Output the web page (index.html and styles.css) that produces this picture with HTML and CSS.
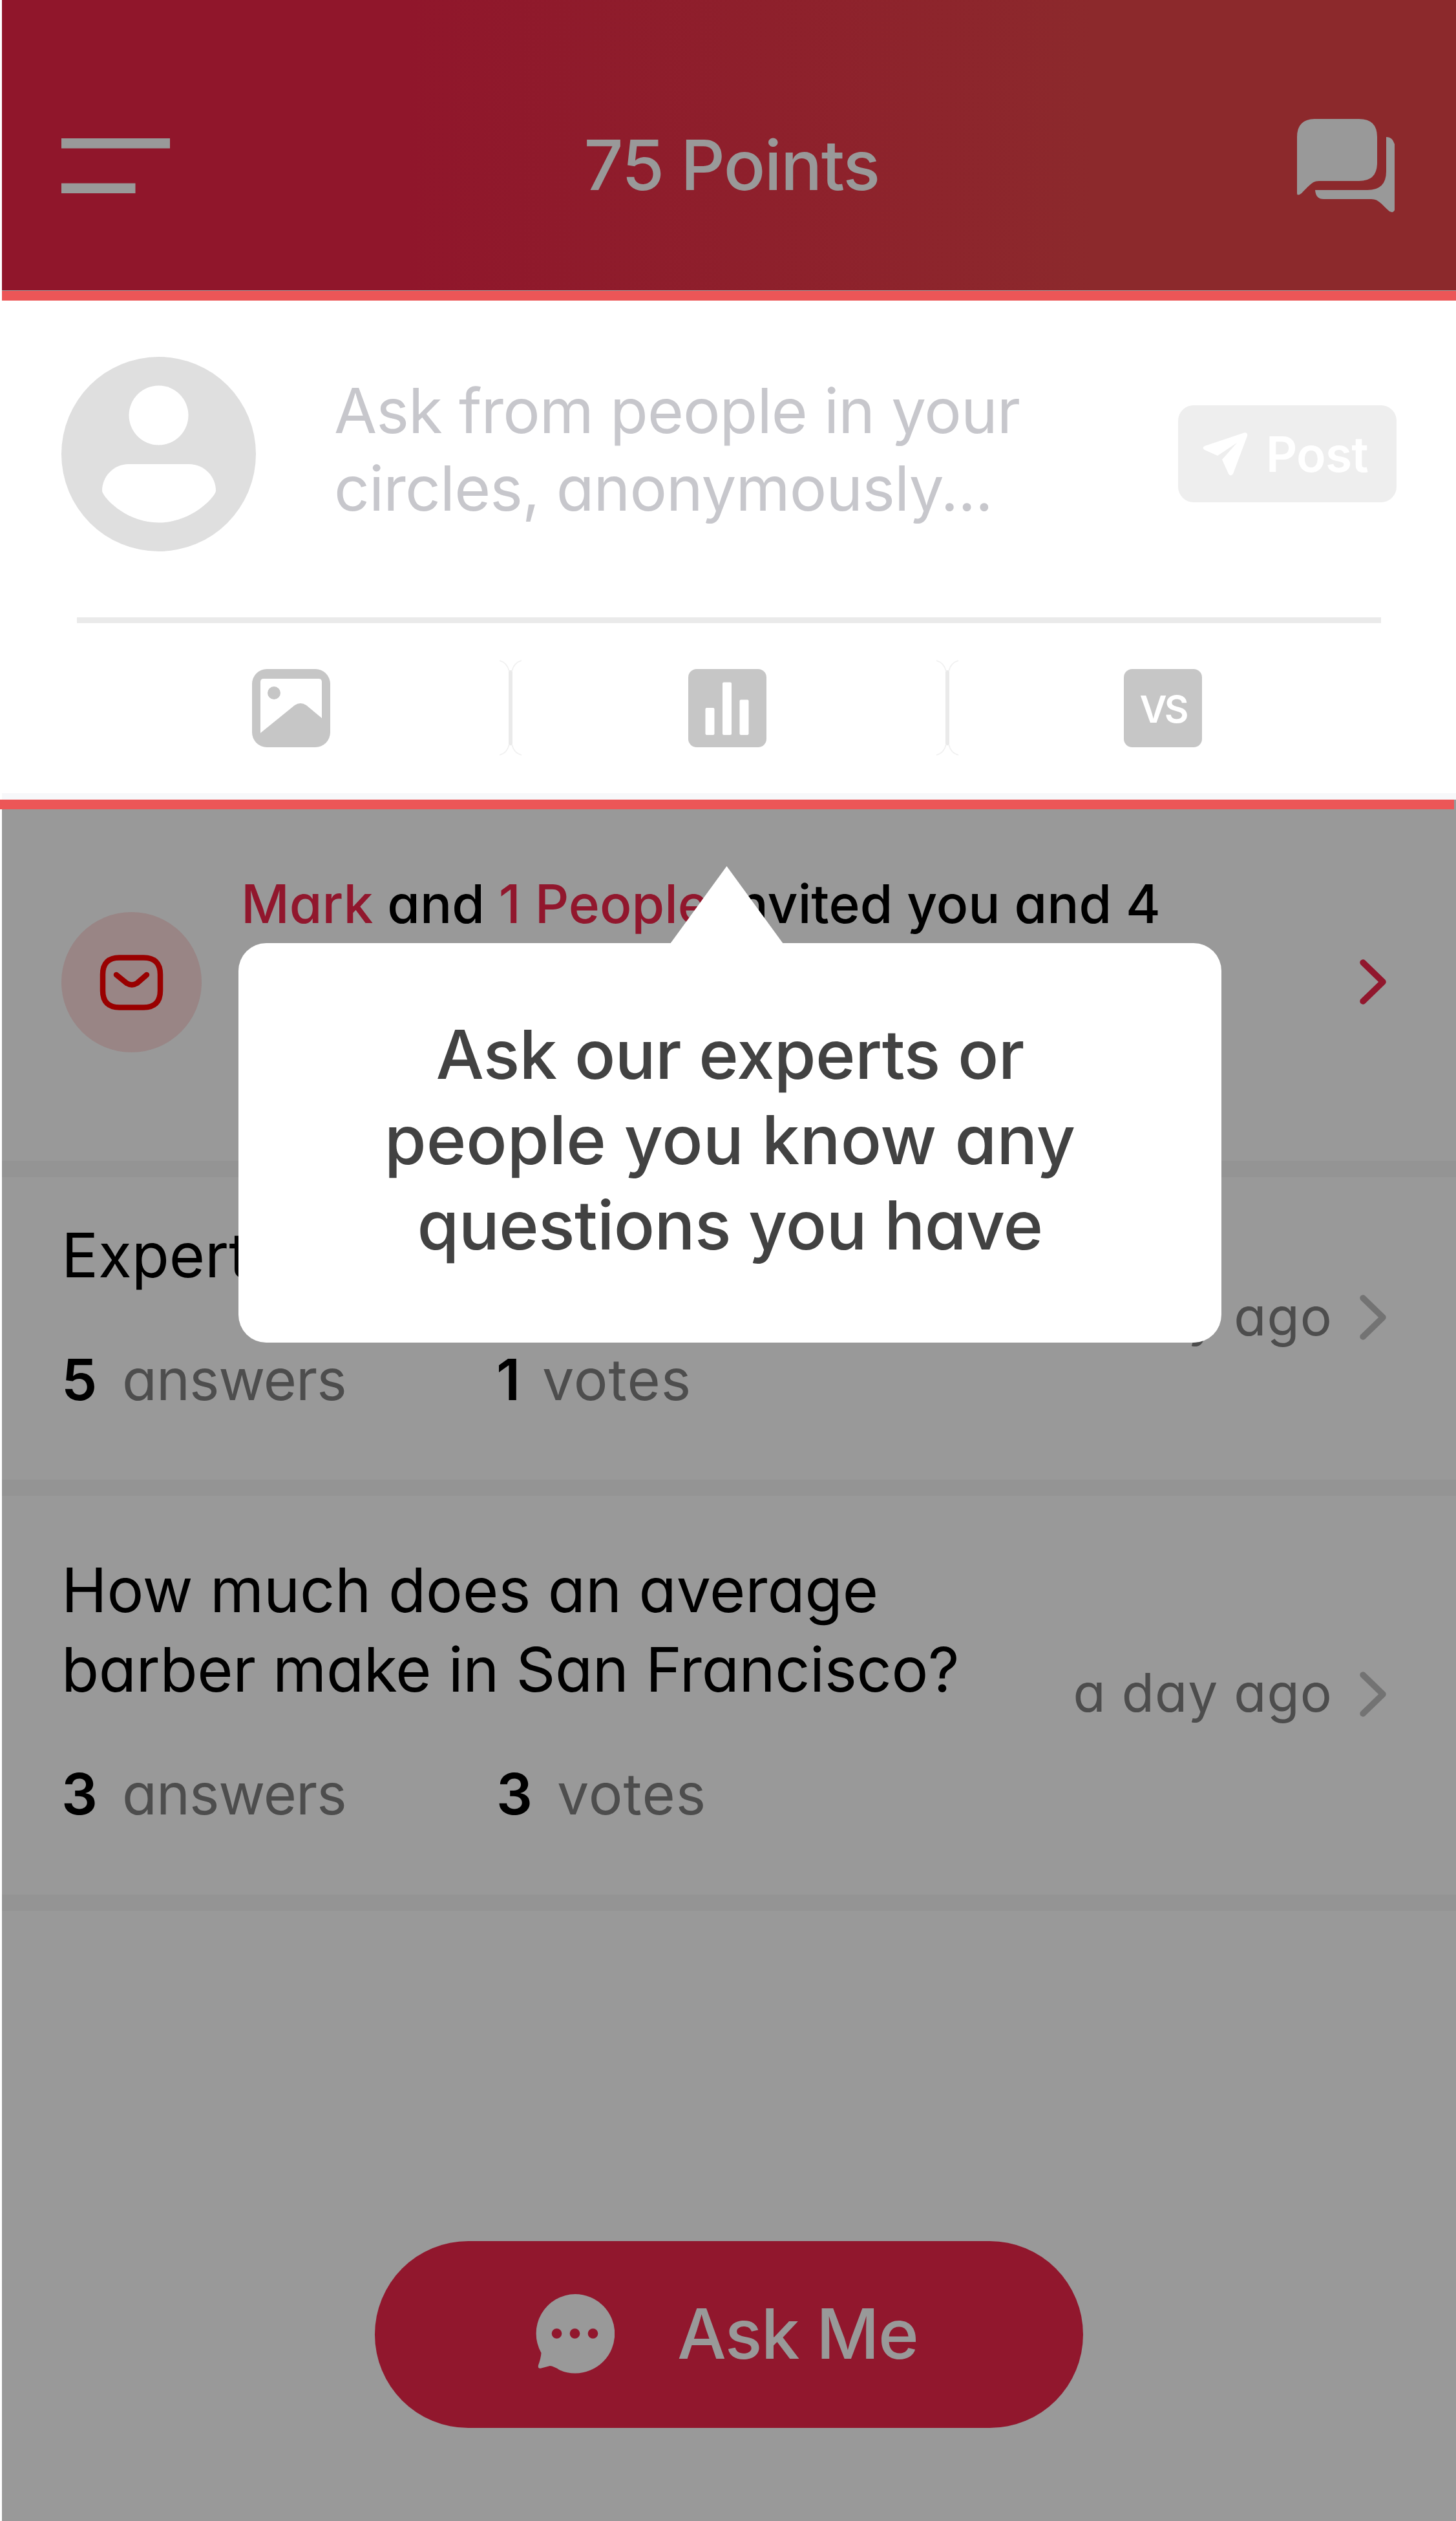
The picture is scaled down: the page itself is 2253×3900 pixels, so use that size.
FILE: index.html
```html
<!DOCTYPE html>
<html lang="en">
<head>
<meta charset="utf-8">
<title>Ask</title>
<link rel="stylesheet" href="styles.css">
</head>
<body>
<main class="app">
  <header class="header">
    <svg class="menu" viewBox="0 0 168 85" aria-label="Menu"><path d="M0 0h168v15.500H0zM0 69.500h114.500V85H0z"/></svg>
    <h1 class="points">75 Points</h1>
    <svg class="chats" viewBox="0 0 152 146" aria-label="Messages">
      <path d="M28 0h68q28 0 28 28v40q0 28-28 28H34C24 96 20 102 7 115q-7 5-7 0V28Q0 0 28 0z"/>
      <path d="M138 28q9-1 13 11v102q-2 5-8 2c-12-10-16-19-28-19H41q-12 0-13-14h81q29 0 29-29z"/>
    </svg>
  </header>

  <section class="composer">
    <div class="ask">
      <svg class="avatar" viewBox="0 0 301 301">
        <circle class="avatar-disc" cx="150.500" cy="150.500" r="150.500"/>
        <circle class="avatar-body" cx="150.500" cy="90.500" r="46"/>
        <path class="avatar-body" d="M104 166h93c25 0 42 20 42 41 0 9-37 49.500-88.500 49.500S63 216 63 207c0-21 17-41 41-41z"/>
      </svg>
      <p class="placeholder">Ask from people in your<br>circles, anonymously...</p>
      <button class="post">
        <svg class="plane" viewBox="0 0 70 67"><path d="M3 21 64 .500q6-1 5 5L47 64q-4 5-7 0L30 42 53 16 23 36 3 27q-5-3 0-6z"/></svg>
        <span>Post</span>
      </button>
    </div>
    <div class="tools">
      <svg class="tool" viewBox="0 0 121 121">
        <rect class="tile" width="121" height="121" rx="23"/>
        <path class="cut" d="M18 15h85q5 0 5 5v56L84 56q-9-6-18 0L13 99V20q0-5 5-5z"/>
        <circle class="tile" cx="34" cy="37" r="10"/>
      </svg>
      <svg class="split" viewBox="0 0 36 148"><path class="stem" d="M18 16v116"/><path class="flare" d="M1 1q12 3 15 17M35 1Q23 4 20 18M1 147q12-3 15-17M35 147q-12-3-15-17"/></svg>
      <svg class="tool tool-poll" viewBox="0 0 121 121">
        <rect class="tile" width="121" height="121" rx="13"/>
        <rect class="cut" x="26.500" y="60" width="14" height="42" rx="2"/>
        <rect class="cut" x="53" y="20.500" width="14" height="81.500" rx="2"/>
        <rect class="cut" x="79.500" y="47.500" width="14" height="54.500" rx="2"/>
      </svg>
      <svg class="split" viewBox="0 0 36 148"><path class="stem" d="M18 16v116"/><path class="flare" d="M1 1q12 3 15 17M35 1Q23 4 20 18M1 147q12-3 15-17M35 147q-12-3-15-17"/></svg>
      <div class="tool versus">VS</div>
    </div>
  </section>
  <div class="edge"></div>

  <section class="invite">
    <svg class="mail" viewBox="0 0 217 217">
      <circle class="mail-disc" cx="108.500" cy="108.500" r="108.500"/>
      <path class="mail-line" d="M90 70.500h37q26 0 26 26v25q0 26-26 26H90q-26 0-26-26v-25q0-26 26-26z"/>
      <path class="mail-line" d="M85 97l16 13q8 5 16 0l15-13"/>
    </svg>
    <p class="invite-text"><b>Mark</b> and <b>1 People</b> invited you and 4</p>
    <svg class="chevron" viewBox="0 0 42 70"><path d="M5 5l31 30L5 65"/></svg>
    <div class="tip">
      <p><span class="snug">Ask our experts or</span><br>people you know any<br><span class="snug">questions you have</span></p>
    </div>
  </section>

  <article class="question question-short">
    <div class="body">
      <h2>Expert</h2>
      <p class="stats"><b>5</b><span class="answers">answers</span><b class="one">1</b><span class="votes">votes</span></p>
    </div>
    <aside class="when"><span>a day ago</span><svg class="chevron" viewBox="0 0 42 70"><path d="M5 5l31 30L5 65"/></svg></aside>
  </article>

  <article class="question question-long">
    <div class="body">
      <h2>How much does an average<br><span class="snug">barber make in San Francisco?</span></h2>
      <p class="stats"><b>3</b><span class="answers">answers</span><b>3</b><span class="votes">votes</span></p>
    </div>
    <aside class="when"><span>a day ago</span><svg class="chevron" viewBox="0 0 42 70"><path d="M5 5l31 30L5 65"/></svg></aside>
  </article>

  <button class="ask-me">
    <svg class="bubble" viewBox="0 0 122 123"><path d="M61 0a61 61 0 0 1 0 122.500q-13 0-24-5-9-6-15-6.500l-15 4q-4 0-3-5 4-11 4.500-19A61 61 0 0 1 61 0z"/><g class="dots"><circle cx="32.500" cy="61" r="7.800"/><circle cx="60.500" cy="61" r="7.800"/><circle cx="88.500" cy="61" r="7.800"/></g></svg>
    <span>Ask Me</span>
  </button>
</main>
</body>
</html>
```
FILE: styles.css
```css
* { box-sizing: border-box; }
body {
  margin: 0;
  background: #fff;
  font-family: Inter, "Liberation Sans", sans-serif;
  font-feature-settings: "cv11";
}
h1, h2, p { margin: 0; font-weight: inherit; }
button { border: 0; padding: 0; font: inherit; }
svg { display: block; flex: none; }

.app {
  display: flex;
  flex-direction: column;
  width: 2250px;
  height: 3900px;
  margin-left: 3px;
  background: #999;
}

.header {
  display: flex;
  align-items: center;
  justify-content: space-between;
  height: 449px;
  padding: 64px 94px 0 92px;
  background: linear-gradient(90deg, #90162b 28%, #8c292c 75%);
}
.menu { width: 168px; height: 85px; fill: #999; }
.points { padding: 0 6px 3px 0; color: #999; font-size: 107px; font-weight: 500; letter-spacing: -1.65px; line-height: 130px; white-space: nowrap; }
.chats { width: 152px; height: 146px; fill: #999; }

.composer {
  height: 787px;
  border-top: 15px solid #ec5657;
  border-bottom: 10px solid #f7f8fa;
  margin-top: 1px;
  background: #fff;
}
.ask { display: flex; align-items: center; height: 490px; margin: 0 92px; padding-bottom: 16px; }
.avatar { width: 301px; height: 301px; }
.avatar-disc { fill: #dfdfdf; }
.avatar-body { fill: #fff; }
.placeholder { flex: 1; margin-left: 121px; padding-bottom: 14px; color: #c7c7cc; font-size: 96px; letter-spacing: -.92px; line-height: 120px; white-space: nowrap; }
.post { display: flex; align-items: center; width: 338px; height: 150px; padding-left: 38px; border-radius: 24px; background: #eee; color: #fff; font-size: 75px; font-weight: 600; letter-spacing: -.8px; }
.plane { width: 70px; height: 67px; margin-right: 28px; fill: #fff; }
.tools {
  display: grid;
  grid-template-columns: 644px 36px 640px 36px 631px;
  place-items: center;
  height: 271px;
  margin-left: 116px;
  margin-right: 116px;
  padding-left: 9px;
  border-top: 9px solid #eaeaea;
}
.tool { width: 121px; height: 121px; }
.tool-poll { margin-right: 6px; }
.tile { fill: #c6c6c6; }
.cut { fill: #fff; }
.split { width: 36px; height: 148px; fill: none; stroke: #eaeaea; }
.stem { stroke-width: 6; }
.flare { stroke-width: 1.500; stroke: #f0f0f0; }
.versus { display: flex; align-items: center; justify-content: center; padding-top: 3px; border-radius: 13px; background: #c6c6c6; color: #fff; font-size: 58px; font-weight: 600; letter-spacing: -4px; }
.edge { flex: none; width: 2250px; height: 15px; margin-left: -3px; background: #ec5657; }

.invite {
  position: relative;
  display: flex;
  align-items: center;
  height: 569px;
  padding: 0 107px 10px 92px;
  border-bottom: 25px solid #949494;
}
.mail { width: 217px; height: 217px; }
.mail-disc { fill: #998585; }
.mail-line { fill: none; stroke: #900; stroke-width: 8.500; stroke-linecap: round; stroke-linejoin: round; }
.invite-text { flex: 1; height: 360px; margin-left: 61px; color: #000; font-size: 82px; font-weight: 500; line-height: 120px; white-space: nowrap; }
.invite-text b { color: #91172d; font-weight: 500; }
.chevron { width: 42px; height: 70px; fill: none; stroke: #737373; stroke-width: 9.500; stroke-linecap: round; stroke-linejoin: round; }
.invite .chevron { stroke: #91172d; }

.tip {
  position: absolute;
  z-index: 2;
  top: 207px;
  left: 366px;
  display: flex;
  align-items: center;
  justify-content: center;
  width: 1521px;
  height: 618px;
  padding-bottom: 10px;
  border-radius: 43px;
  background: #fff;
  color: #424242;
  font-size: 105px;
  font-weight: 500;
  line-height: 132px;
  text-align: center;
  white-space: nowrap;
}
.tip .snug { letter-spacing: -.7px; }
.tip::before {
  content: "";
  position: absolute;
  top: -119px;
  left: 668px;
  width: 175px;
  height: 120px;
  background: #fff;
  clip-path: polygon(50% 0, 100% 100%, 0 100%);
}

.question { display: flex; justify-content: space-between; padding: 0 107px 0 92px; border-bottom: 25px solid #949494; }
.question-short { height: 493px; padding-top: 59px; }
.question-long { height: 642px; padding-top: 84px; }
.question h2 { color: #000; font-size: 95px; letter-spacing: -.1px; line-height: 123px; white-space: nowrap; }
.question .snug { letter-spacing: -.37px; }
.stats { display: flex; margin-top: 81px; color: #4d4d4d; font-size: 88px; letter-spacing: -1px; line-height: 100px; }
.stats b { width: 94px; color: #000; font-weight: 600; }
.stats .one { width: 71px; }
.answers { width: 579px; }
.votes { letter-spacing: 1px; }
.when { display: flex; align-items: center; gap: 42px; color: #4d4d4d; font-size: 82px; letter-spacing: 1px; white-space: nowrap; }
.when span { padding-bottom: 4px; }
.question-short .when { margin-top: -59px; padding-bottom: 34px; }
.question-long .when { margin-top: -84px; padding-bottom: 4px; }

.ask-me {
  display: flex;
  align-items: center;
  width: 1096px;
  height: 289px;
  margin: 511px 0 0 577px;
  padding: 0 0 3px 249px;
  border-radius: 145px;
  background: #91172d;
  color: #999;
  font-size: 107px;
  font-weight: 500;
  letter-spacing: -1.6px;
}
.bubble { width: 122px; height: 123px; margin-right: 97px; fill: #999; }
.dots { fill: #91172d; }
```
